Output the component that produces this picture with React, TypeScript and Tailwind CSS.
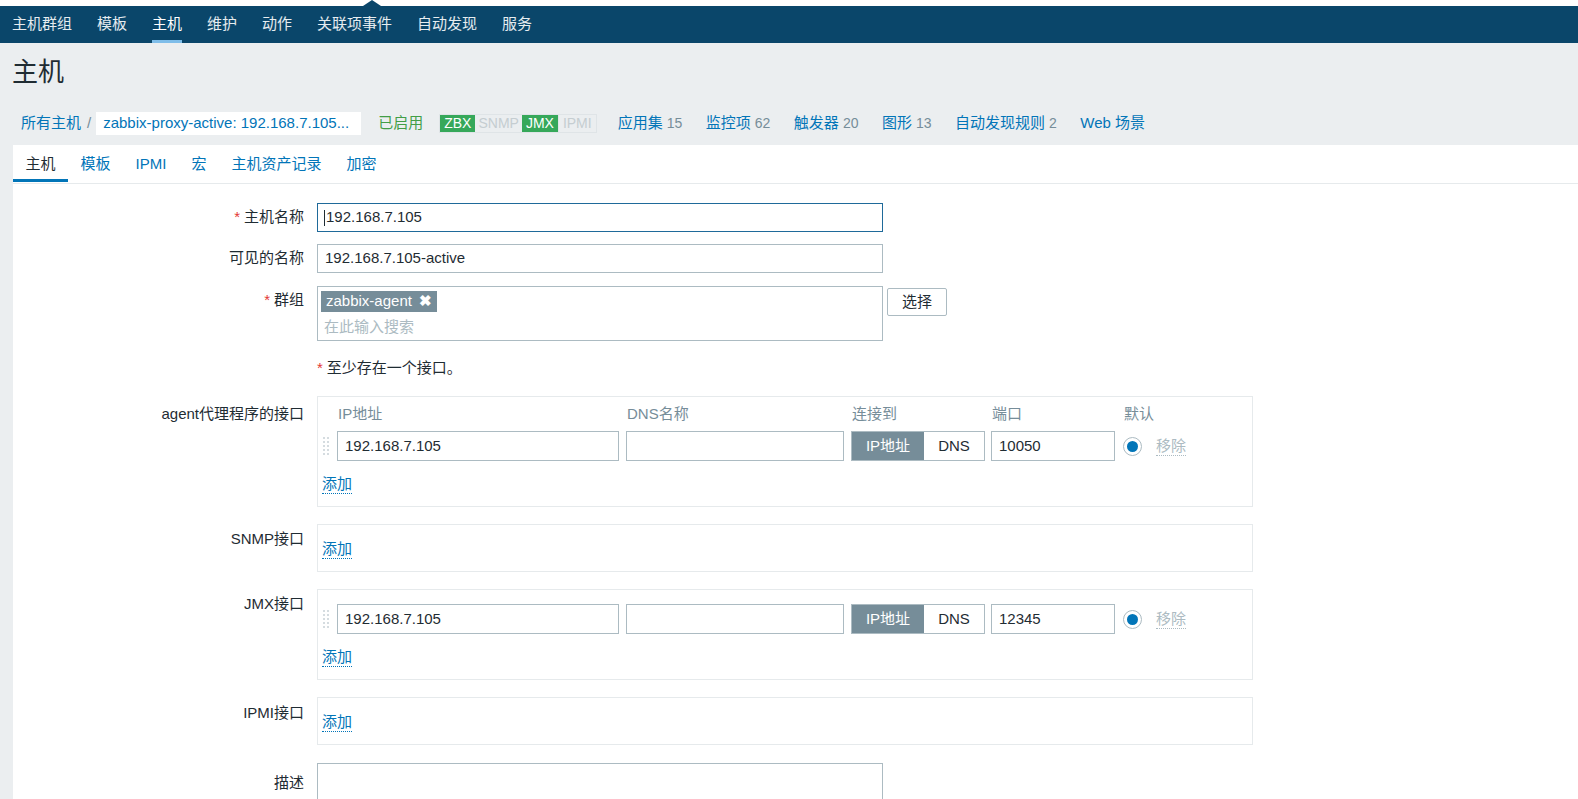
import React from "react";

const font = "font-['Liberation_Sans','Noto_Sans_CJK_SC',sans-serif]";

const navItems = ["主机群组", "模板", "主机", "维护", "动作", "关联项事件", "自动发现", "服务"];

function AddLink() {
  return (
    <span className="text-[#0275b8] border-b border-dotted border-[#0275b8] leading-[18px]">添加</span>
  );
}

function DragHandle() {
  return (
    <div className="w-[15px] h-[30px] flex items-center">
      <div className="grid grid-cols-2 gap-x-[2px] gap-y-[2px] ml-[1px]">
        {Array.from({ length: 10 }).map((_, i) => (
          <span key={i} className="w-[2px] h-[2px] bg-[#d5dce0]" />
        ))}
      </div>
    </div>
  );
}

function InterfaceRow({ port }: { port: string }) {
  return (
    <div className="flex items-center h-[30px]">
      <DragHandle />
      <div className="w-[282px] h-[30px] border border-[#acbbc2] bg-white px-[7px] flex items-center">192.168.7.105</div>
      <div className="ml-[7px] w-[218px] h-[30px] border border-[#acbbc2] bg-white" />
      <div className="ml-[7px] w-[134px] h-[30px] border border-[#acbbc2] flex">
        <div className="w-[72px] bg-[#768d99] text-white flex items-center justify-center">IP地址</div>
        <div className="flex-1 flex items-center justify-center">DNS</div>
      </div>
      <div className="ml-[6px] w-[124px] h-[30px] border border-[#acbbc2] bg-white px-[7px] flex items-center">{port}</div>
      <div className="ml-[8px] w-[19px] h-[19px] rounded-full border border-[#acbbc2] flex items-center justify-center">
        <span className="w-[11px] h-[11px] rounded-full bg-[#0275b8]" />
      </div>
      <span className="ml-[14px] text-[#acbbc2] border-b border-dotted border-[#acbbc2] leading-[18px]">移除</span>
    </div>
  );
}

function Row({
  label,
  required,
  children,
  className,
  labelPad,
}: {
  label: string;
  required?: boolean;
  children: React.ReactNode;
  className?: string;
  labelPad?: string;
}) {
  return (
    <div className={`flex items-start ${className ?? ""}`}>
      <div className={`w-[291px] text-right leading-[18px] shrink-0 ${labelPad ?? "pt-[5px]"}`}>
        {required && <span className="text-[#e33734] mr-[4px]">*</span>}
        {label}
      </div>
      <div className="ml-[13px]">{children}</div>
    </div>
  );
}

function Box({ children, className }: { children: React.ReactNode; className?: string }) {
  return (
    <div className={`w-[936px] border border-[#e6eaec] bg-white pl-[4px] ${className ?? ""}`}>{children}</div>
  );
}

export default function App() {
  return (
    <div className={`min-h-screen bg-[#ebeef0] text-[15px] text-[#1f2c33] ${font}`}>
      <div className="h-[6px] bg-white relative">
        <svg className="absolute left-[363px] top-0" width="18" height="6" viewBox="0 0 18 6">
          <polygon points="0,6 9,0 18,6" fill="#0a466a" />
        </svg>
      </div>
      <nav className="h-[37px] bg-[#0a466a] flex items-stretch pl-[12px] gap-[25px]">
        {navItems.map((n) => (
          <div key={n} className={`relative flex items-center ${n === "主机" ? "text-white" : "text-white/90"}`}>
            {n}
            {n === "主机" && <span className="absolute left-0 right-0 bottom-0 h-[3px] bg-[#7ebde9]" />}
          </div>
        ))}
      </nav>

      <h1 className="pl-[12px] pt-[14px] text-[26px] leading-[30px] font-normal">主机</h1>

      <div className="mt-[25px] h-[23px] flex items-center pl-[21px]">
        <span className="text-[#0275b8]">所有主机</span>
        <span className="ml-[6px] mr-[5px] text-[#768d99]">/</span>
        <span className="bg-white h-[23px] px-[7px] flex items-center text-[#0275b8] w-[265px]">zabbix-proxy-active: 192.168.7.105...</span>
        <span className="ml-[17px] text-[#429e47]">已启用</span>
        <div className="ml-[16px] flex h-[19px] border border-[#dfe4e7] text-[14px] leading-[17px]">
          <span className="px-[4px] bg-[#36a85a] text-white">ZBX</span>
          <span className="px-[3px] text-[#c5cdd1]">SNMP</span>
          <span className="px-[4px] bg-[#36a85a] text-white">JMX</span>
          <span className="px-[4px] text-[#c5cdd1] border-l border-[#dfe4e7]">IPMI</span>
        </div>
        {[
          ["应用集", "15"],
          ["监控项", "62"],
          ["触发器", "20"],
          ["图形", "13"],
          ["自动发现规则", "2"],
          ["Web 场景", ""],
        ].map(([t, c], i) => (
          <span key={t} className={`${i === 0 ? "ml-[21px]" : "ml-[23.5px]"} text-[#0275b8]`}>
            {t}
            {c && <span className="text-[#768d99] text-[14px] ml-[4px]">{c}</span>}
          </span>
        ))}
      </div>

      <div className="mt-[10px] ml-[13px] bg-white pb-[40px]">
        <div className="h-[39px] flex border-b border-[#e6eaec]">
          {["主机", "模板", "IPMI", "宏", "主机资产记录", "加密"].map((t, i) => (
            <div
              key={t}
              className={`relative px-[12.5px] flex items-center ${i === 0 ? "text-[#1f2c33]" : "text-[#0275b8]"}`}
            >
              {t}
              {i === 0 && <span className="absolute left-0 right-0 bottom-[1px] h-[3px] bg-[#0275b8]" />}
            </div>
          ))}
        </div>

        <div className="pt-[19px]">
          <Row label="主机名称" required>
            <div className="w-[566px] h-[29px] border border-[#1f6a9a] flex items-center px-[6px]">
              <span className="w-[1px] h-[16px] bg-[#1f2c33] mr-[1px]" />
              192.168.7.105
            </div>
          </Row>
          <Row label="可见的名称" className="mt-[12px]">
            <div className="w-[566px] h-[29px] border border-[#acbbc2] flex items-center px-[7px]">192.168.7.105-active</div>
          </Row>
          <Row label="群组" required className="mt-[13px]">
            <div className="flex items-start">
              <div className="w-[566px] h-[55px] border border-[#acbbc2] pl-[3px] pt-[3px]">
                <span className="inline-flex items-center h-[21px] bg-[#768d99] text-white px-[5px]">
                  zabbix-agent
                  <span className="ml-[7px] text-[15px] font-bold">✖</span>
                </span>
                <div className="mt-[5px] pl-[3px] text-[#acbbc2] leading-[18px]">在此输入搜索</div>
              </div>
              <div className="ml-[4px] mt-[2px] w-[60px] h-[28px] border border-[#acbbc2] rounded-[2px] flex items-center justify-center">选择</div>
            </div>
          </Row>
          <Row label="" className="mt-[13px]">
            <div className="leading-[18px] pt-[5px]">
              <span className="text-[#e33734] mr-[4px]">*</span>至少存在一个接口。
            </div>
          </Row>

          <Row label="agent代理程序的接口" className="mt-[19px]" labelPad="pt-[9px]">
            <Box className="pt-[8px] pb-[12px]">
              <div className="flex h-[18px] leading-[18px] text-[#768d99]">
                <span className="ml-[16px] w-[289px]">IP地址</span>
                <span className="w-[225px]">DNS名称</span>
                <span className="w-[140px]">连接到</span>
                <span className="w-[132px]">端口</span>
                <span>默认</span>
              </div>
              <div className="mt-[8px]">
                <InterfaceRow port="10050" />
              </div>
              <div className="mt-[13px] h-[20px] flex items-center">
                <AddLink />
              </div>
            </Box>
          </Row>

          <Row label="SNMP接口" className="mt-[17px]" labelPad="pt-[6px]">
            <Box className="pt-[15px] pb-[13px]">
              <div className="h-[18px] flex items-center">
                <AddLink />
              </div>
            </Box>
          </Row>

          <Row label="JMX接口" className="mt-[17px]" labelPad="pt-[6px]">
            <Box className="pt-[14px] pb-[12px]">
              <InterfaceRow port="12345" />
              <div className="mt-[13px] h-[20px] flex items-center">
                <AddLink />
              </div>
            </Box>
          </Row>

          <Row label="IPMI接口" className="mt-[17px]" labelPad="pt-[7px]">
            <Box className="pt-[15px] pb-[13px]">
              <div className="h-[18px] flex items-center">
                <AddLink />
              </div>
            </Box>
          </Row>

          <Row label="描述" className="mt-[18px]" labelPad="pt-[11px]">
            <div className="w-[566px] h-[70px] border border-[#acbbc2]" />
          </Row>
        </div>
      </div>
    </div>
  );
}
